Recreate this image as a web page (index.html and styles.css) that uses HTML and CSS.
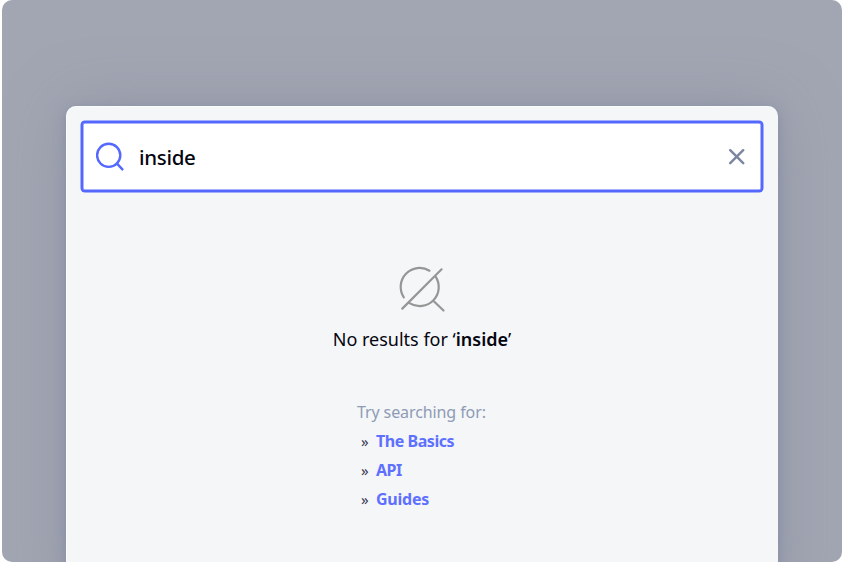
FILE: index.html
```html
<!DOCTYPE html>
<html lang="en">
<head>
<meta charset="utf-8">
<title>Search</title>
<link rel="stylesheet" href="styles.css">
</head>
<body>
<div class="backdrop">
  <main class="modal">
    <div class="field">
      <svg class="search" viewBox="0 0 30 30" fill="none" stroke="#5468ff" stroke-width="2.4" stroke-linecap="round"><circle cx="12.7" cy="13.3" r="11.6"/><path d="M20.8 21.4l5.6 6"/></svg>
      <span class="query">inside</span>
      <svg class="clear" viewBox="0 0 16 16" fill="none" stroke="#7b86a0" stroke-width="2.4" stroke-linecap="round"><path d="M1.2 1.2l13 13M14.2 1.2l-13 13"/></svg>
    </div>
    <section class="empty">
      <svg class="noresult" viewBox="0 0 48 48" fill="none" stroke="#969696" stroke-width="2.2" stroke-linecap="round"><path d="M31.5 5.7A19 19 0 0 0 5.8 32.4M37.3 11.2A19 19 0 0 1 11.5 38.1M4.3 43.6L43.6 4.3M35.3 35.7l10.2 9.8"/></svg>
      <p class="title"><span class="title-text">No results for ‘<b>inside</b>’</span></p>
      <div class="suggestions">
        <p class="hint">Try searching for:</p>
        <ul>
          <li><span class="mark">»</span><a class="basics">The Basics</a></li>
          <li><span class="mark">»</span><a class="api">API</a></li>
          <li><span class="mark">»</span><a class="guides">Guides</a></li>
        </ul>
      </div>
    </section>
  </main>
</div>
</body>
</html>
```
FILE: styles.css
```css
* { box-sizing: border-box; }
body { margin: 0; background: #fff; font-family: "Noto Sans", sans-serif; color: #050510; }
p, ul { margin: 0; padding: 0; }
.backdrop { height: 562px; margin: 0 2px; padding: 106px 64px 0; background: #a2a6b2; border-radius: 10px; overflow: hidden; }
.modal { height: 500px; padding: 15px; background: #f5f6f8; border-radius: 10px 10px 0 0; box-shadow: inset 1px 1px 0 rgba(255,255,255,.5), 0 0 64px rgba(122,125,150,.38), 0 3px 12px rgba(119,130,163,.6); }
.field { height: 71px; display: flex; align-items: center; padding: 0 16px 0 13px; background: #fff; border: 2px solid #5468ff; border-radius: 4px; box-shadow: 0 0 0 .5px #5468ff, inset 0 0 0 .5px #5468ff; }
.search { width: 30px; height: 30px; }
.query { margin-left: 13px; font-size: 20.5px; letter-spacing: -.3px; font-weight: 500; line-height: 30px; white-space: nowrap; }
.clear { width: 16px; height: 16px; margin-left: auto; }
.empty { display: flex; flex-direction: column; align-items: center; padding-top: 73px; }
.noresult { width: 48px; height: 48px; }
.title { margin-top: 12px; font-size: 18px; line-height: 28px; white-space: nowrap; }
.title b { font-weight: 600; }
.suggestions { width: 130px; margin-top: 45px; white-space: nowrap; font-size: 16px; line-height: 29px; }
.hint { color: #8e9bb5; letter-spacing: -.1px; }
li { display: flex; padding-left: 4px; color: #383850; }
.mark { width: 15px; font-size: 15px; }
a { color: #5e70ff; font-weight: 700; letter-spacing: -.45px; }
.guides { letter-spacing: -.25px; }
```
